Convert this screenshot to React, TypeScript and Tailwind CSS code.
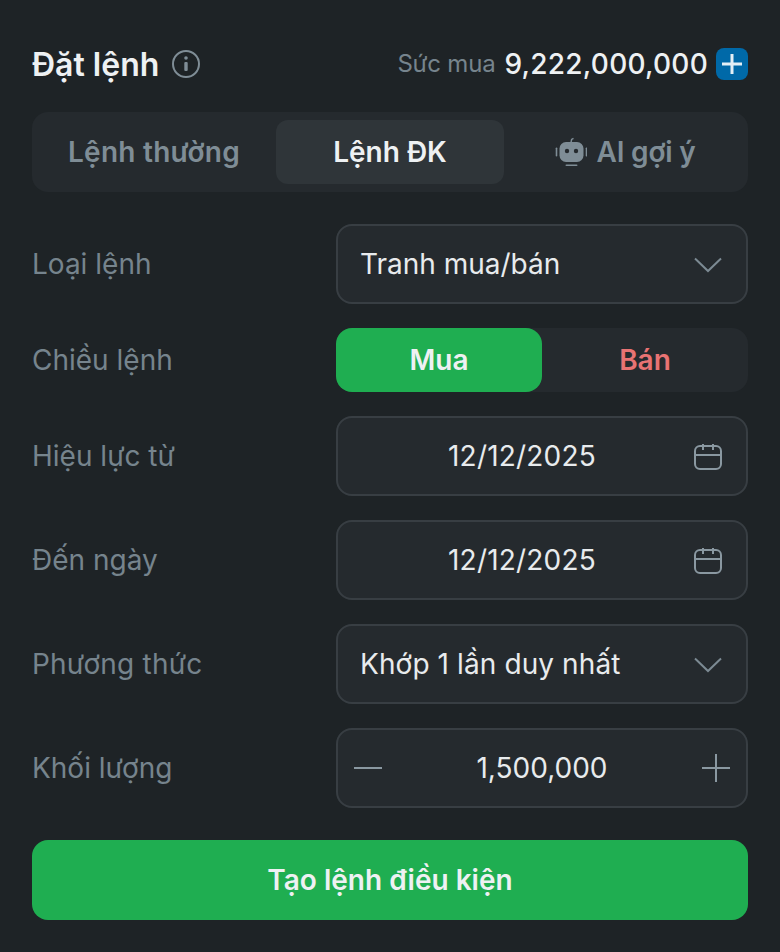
const font = "font-['Inter',sans-serif]";

function ChevronIcon() {
  return (
    <svg width="28" height="28" viewBox="0 0 28 28" fill="none" stroke="#7c8a93" strokeWidth="2">
      <path d="M1 8.5L14 21L27 8.5" />
    </svg>
  );
}

function CalendarIcon() {
  return (
    <svg width="28" height="28" viewBox="0 0 28 28" fill="none" stroke="#8a98a1" strokeWidth="2">
      <rect x="1" y="4" width="26" height="23" rx="5" />
      <path d="M1 13H27M9 2V8M19 2V8" />
    </svg>
  );
}

function RobotIcon() {
  return (
    <svg width="32" height="32" viewBox="0 0 32 32" fill="#7f8d96">
      <path d="M16 6.5L16.6 3.5L18.5 2.3" fill="none" stroke="#7f8d96" strokeWidth="1.4" />
      <rect x="4.5" y="6" width="24" height="20" rx="6.5" />
      <circle cx="12" cy="15" r="2.2" fill="#252a2e" />
      <circle cx="21" cy="15" r="2.2" fill="#252a2e" />
      <rect x="0.7" y="11.5" width="1.6" height="9" rx="0.8" />
      <rect x="30.7" y="11.5" width="1.6" height="9" rx="0.8" />
      <rect x="10.5" y="28.5" width="12" height="1.6" rx="0.8" />
    </svg>
  );
}

function Row({ label, children, wide }: { label: string; children: React.ReactNode; wide?: boolean }) {
  return (
    <div className="flex items-center">
      <div className={`w-[304px] text-[28px] text-[#76848d] ${wide ? "tracking-[0.2px]" : ""}`}>{label}</div>
      <div className="w-[412px]">{children}</div>
    </div>
  );
}

const fieldStyle =
  "h-20 rounded-2xl border-2 border-[#383e43] bg-[#252a2e] flex items-center text-[28px] text-[#e8ebed]";

function SelectField({ value }: { value: string }) {
  return (
    <div className={`${fieldStyle} justify-between pl-[22px] pr-[24px]`}>
      <span>{value}</span>
      <ChevronIcon />
    </div>
  );
}

function DateField({ value }: { value: string }) {
  return (
    <div className={`${fieldStyle} relative justify-center pr-10`}>
      <span className="tracking-[0.2px]">{value}</span>
      <span className="absolute right-[24px] top-[24px]">
        <CalendarIcon />
      </span>
    </div>
  );
}

export default function App() {
  return (
    <div className={`${font} w-[780px] h-[952px] bg-[#1e2326] px-8 pt-12`}>
      <div className="flex items-center justify-between h-8">
        <div className="flex items-center gap-[13px]">
          <span className="text-[32px] font-semibold text-[#eef1f3] pt-0.5">Đặt lệnh</span>
          <svg width="28" height="28" viewBox="0 0 28 28" fill="none">
            <circle cx="14" cy="14" r="13" stroke="#7f8d96" strokeWidth="2" />
            <circle cx="14" cy="8" r="1.8" fill="#7f8d96" />
            <rect x="12.3" y="12" width="3.4" height="9" rx="1" fill="#7f8d96" />
          </svg>
        </div>
        <div className="flex items-center">
          <span className="text-2xl tracking-[-0.2px] text-[#76848d]">Sức mua</span>
          <span className="ml-[9px] text-[28px] font-medium tracking-[0.25px] text-[#eef1f3]">9,222,000,000</span>
          <span className="ml-2 w-8 h-8 rounded-lg bg-[#0069a8] flex items-center justify-center">
            <svg width="24" height="24" viewBox="0 0 24 24" stroke="#e3eff6" strokeWidth="3">
              <path d="M2 12H22M12 2V22" />
            </svg>
          </span>
        </div>
      </div>

      <div className="mt-8 h-20 rounded-2xl bg-[#252a2e] p-2 grid grid-cols-3 gap-2 text-[28px] font-semibold">
        <div className="flex items-center justify-center tracking-[0.25px] text-[#7f8d96]">Lệnh thường</div>
        <div className="flex items-center justify-center rounded-xl bg-[#2f3539] text-[#eef1f3]">Lệnh ĐK</div>
        <div className="flex items-center justify-center gap-[10px] pr-0.5 text-[#7f8d96]">
          <RobotIcon />
          <span className="tracking-[-0.2px]">AI gợi ý</span>
        </div>
      </div>

      <div className="mt-8 flex flex-col gap-6">
        <Row label="Loại lệnh">
          <SelectField value="Tranh mua/bán" />
        </Row>
        <Row label="Chiều lệnh">
          <div className="h-16 rounded-2xl bg-[#252a2e] flex text-[28px] font-semibold">
            <div className="w-[206px] rounded-2xl bg-[#1fae51] flex items-center justify-center text-[#eef1f3]">Mua</div>
            <div className="flex-1 flex items-center justify-center text-[#e97373]">Bán</div>
          </div>
        </Row>
        <Row label="Hiệu lực từ">
          <DateField value="12/12/2025" />
        </Row>
        <Row label="Đến ngày">
          <DateField value="12/12/2025" />
        </Row>
        <Row label="Phương thức" wide>
          <div className={`${fieldStyle} justify-between pl-[22px] pr-[24px]`}>
            <span className="tracking-[0.1px]">Khớp 1 lần duy nhất</span>
            <ChevronIcon />
          </div>
        </Row>
        <Row label="Khối lượng">
          <div className={`${fieldStyle} justify-between px-4`}>
            <svg width="28" height="28" viewBox="0 0 28 28" stroke="#8a98a1" strokeWidth="2">
              <path d="M0 14H28" />
            </svg>
            <span>1,500,000</span>
            <svg width="28" height="28" viewBox="0 0 28 28" stroke="#8a98a1" strokeWidth="2">
              <path d="M0 14H28M14 0V28" />
            </svg>
          </div>
        </Row>
      </div>

      <div className="mt-8 h-20 rounded-2xl bg-[#1fae51] flex items-center justify-center text-[28px] font-semibold text-[#eef1f3]">
        Tạo lệnh điều kiện
      </div>
    </div>
  );
}
